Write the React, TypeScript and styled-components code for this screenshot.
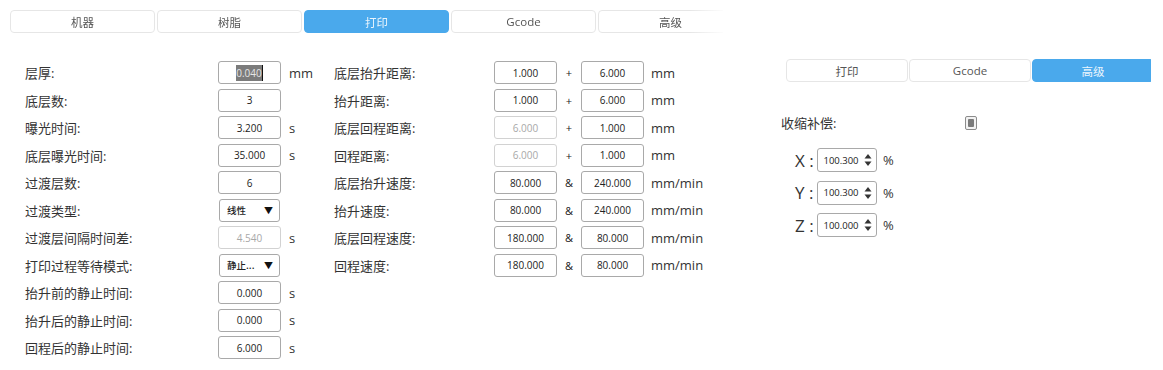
import React from "react";
import styled, { createGlobalStyle } from "styled-components";

const Global = createGlobalStyle`
  html, body { margin: 0; padding: 0; background: #ffffff; }
  body {
    font-family: "Open Sans", "Noto Sans CJK SC", sans-serif;
    color: #333333;
    width: 1163px;
    height: 370px;
    overflow: hidden;
  }
`;

const Root = styled.div`
  display: flex;
  align-items: flex-start;
  width: 1163px;
  height: 370px;
`;

const LeftPanel = styled.div`
  width: 713px;
  padding: 10px 0 0 10px;
  flex-shrink: 0;
`;

const TabBar = styled.div<{ $w: number; $gap: number }>`
  display: flex;
  gap: ${(p) => p.$gap}px;
  width: ${(p) => p.$w}px;
  overflow: hidden;
`;

const FadeBar = styled(TabBar)`
  -webkit-mask-image: linear-gradient(to right, #000 0, #000 680px, rgba(0,0,0,0.1) 713px);
  mask-image: linear-gradient(to right, #000 0, #000 680px, rgba(0,0,0,0.1) 713px);
`;

const Tab = styled.div<{ $active?: boolean; $w: number }>`
  flex-shrink: 0;
  width: ${(p) => p.$w}px;
  height: 23px;
  box-sizing: border-box;
  border: 1px solid ${(p) => (p.$active ? "#4aa9ec" : "#e6e6e6")};
  border-radius: 4px;
  background: ${(p) => (p.$active ? "#4aa9ec" : "#ffffff")};
  color: ${(p) => (p.$active ? "#eaf5fd" : "#555555")};
  font-size: 11.5px;
  display: flex;
  align-items: center;
  justify-content: center;
`;

const Form = styled.div`
  display: flex;
  margin-top: 28px;
  padding-left: 15px;
`;

const LeftGrid = styled.div`
  width: 309px;
  display: grid;
  grid-template-columns: 193px 63px auto;
  grid-auto-rows: 23px;
  row-gap: 4.5px;
  align-items: center;
`;

const MidGrid = styled.div`
  display: grid;
  grid-template-columns: 160px 63px 24px 63px auto;
  grid-auto-rows: 23px;
  row-gap: 4.5px;
  align-items: center;
`;

const Label = styled.div`
  font-size: 13px;
  color: #333;
  white-space: nowrap;
`;

const Unit = styled.div<{ $pad: number }>`
  font-size: 13px;
  color: #333;
  padding-left: ${(p) => p.$pad}px;
  white-space: nowrap;
`;

const Joiner = styled.div`
  font-size: 11px;
  color: #222;
  text-align: center;
`;

const Box = styled.div<{ $disabled?: boolean }>`
  height: 23px;
  box-sizing: border-box;
  border: 1px solid ${(p) => (p.$disabled ? "#d2d2d2" : "#a9a9a9")};
  border-radius: 3px;
  background: #fff;
  display: flex;
  align-items: center;
  justify-content: center;
  font-size: 10px;
  color: ${(p) => (p.$disabled ? "#a8a8a8" : "#222")};
`;

const Selected = styled.span`
  background: #7b7b7b;
  color: #e6e6e6;
  padding: 1px 0;
  border-right: 1px solid #111;
`;

const SelectBox = styled(Box)`
  width: 61px;
  margin-left: 1px;
  justify-content: space-between;
  padding: 0 6px 0 7px;
  font-family: "Noto Sans CJK SC", sans-serif;
  font-size: 9.5px;
  font-weight: 500;
`;

const Caret = styled.span`
  font-size: 9px;
  color: #111;
`;

const RightPanel = styled.div`
  margin-left: 58px;
  padding-top: 59px;
  width: 380px;
  flex-shrink: 0;
`;

const TabsWrap = styled.div`
  margin-left: 5px;
`;

const CheckRow = styled.div`
  display: grid;
  grid-template-columns: 184px 12px;
  align-items: center;
  margin-top: 31px;
  height: 16px;
`;

const Check = styled.div`
  width: 12px;
  height: 14px;
  box-sizing: border-box;
  border: 1px solid #8c8c8c;
  border-radius: 2px;
  background: #f2f2f2;
  padding: 2px;
  display: flex;
`;

const CheckFill = styled.div`
  flex: 1;
  background: #7a7a7a;
  border-radius: 1px;
`;

const AxisList = styled.div`
  display: grid;
  grid-template-columns: 22px 60px auto;
  grid-auto-rows: 24px;
  row-gap: 8.5px;
  align-items: center;
  margin-top: 19px;
  padding-left: 14px;
`;

const Axis = styled.div`
  font-size: 17px;
  color: #333;
  font-family: "Open Sans", sans-serif;
  white-space: nowrap;
`;

const Spin = styled.div`
  height: 24px;
  box-sizing: border-box;
  border: 1px solid #a9a9a9;
  border-radius: 3px;
  display: flex;
  align-items: center;
  padding: 0 4px 0 0;
`;

const SpinValue = styled.div`
  flex: 1;
  text-align: center;
  font-size: 9.5px;
  color: #222;
`;

const Percent = styled.div`
  font-size: 13px;
  color: #333;
  padding-left: 6px;
`;

type Row = {
  label: string;
  value?: string;
  unit?: string;
  disabled?: boolean;
  selected?: boolean;
  select?: string;
};

const leftRows: Row[] = [
  { label: "层厚:", value: "0.040", unit: "mm", selected: true },
  { label: "底层数:", value: "3" },
  { label: "曝光时间:", value: "3.200", unit: "s" },
  { label: "底层曝光时间:", value: "35.000", unit: "s" },
  { label: "过渡层数:", value: "6" },
  { label: "过渡类型:", select: "线性" },
  { label: "过渡层间隔时间差:", value: "4.540", unit: "s", disabled: true },
  { label: "打印过程等待模式:", select: "静止..." },
  { label: "抬升前的静止时间:", value: "0.000", unit: "s" },
  { label: "抬升后的静止时间:", value: "0.000", unit: "s" },
  { label: "回程后的静止时间:", value: "6.000", unit: "s" },
];

type PairRow = {
  label: string;
  a: string;
  aDisabled?: boolean;
  join: string;
  b: string;
  unit: string;
};

const midRows: PairRow[] = [
  { label: "底层抬升距离:", a: "1.000", join: "+", b: "6.000", unit: "mm" },
  { label: "抬升距离:", a: "1.000", join: "+", b: "6.000", unit: "mm" },
  { label: "底层回程距离:", a: "6.000", aDisabled: true, join: "+", b: "1.000", unit: "mm" },
  { label: "回程距离:", a: "6.000", aDisabled: true, join: "+", b: "1.000", unit: "mm" },
  { label: "底层抬升速度:", a: "80.000", join: "&", b: "240.000", unit: "mm/min" },
  { label: "抬升速度:", a: "80.000", join: "&", b: "240.000", unit: "mm/min" },
  { label: "底层回程速度:", a: "180.000", join: "&", b: "80.000", unit: "mm/min" },
  { label: "回程速度:", a: "180.000", join: "&", b: "80.000", unit: "mm/min" },
];

const axes = [
  { axis: "X", value: "100.300" },
  { axis: "Y", value: "100.300" },
  { axis: "Z", value: "100.000" },
];

const SpinArrows = () => (
  <svg width="8" height="14" viewBox="0 0 8 14">
    <path d="M4 1 L7.5 5.5 L0.5 5.5 Z" fill="#333" />
    <path d="M0.5 8.5 L7.5 8.5 L4 13 Z" fill="#333" />
  </svg>
);

export default function App() {
  const mainTabs = ["机器", "树脂", "打印", "Gcode", "高级"];
  const sideTabs = ["打印", "Gcode", "高级"];
  return (
    <>
      <Global />
      <Root>
        <LeftPanel>
          <FadeBar $w={713} $gap={2}>
            {mainTabs.map((t) => (
              <Tab key={t} $w={145} $active={t === "打印"}>
                {t}
              </Tab>
            ))}
          </FadeBar>
          <Form>
            <LeftGrid>
              {leftRows.map((r) => (
                <React.Fragment key={r.label}>
                  <Label>{r.label}</Label>
                  {r.select ? (
                    <SelectBox>
                      <span>{r.select}</span>
                      <Caret>▼</Caret>
                    </SelectBox>
                  ) : (
                    <Box $disabled={r.disabled}>
                      {r.selected ? <Selected>{r.value}</Selected> : r.value}
                    </Box>
                  )}
                  <Unit $pad={8}>{r.unit ?? ""}</Unit>
                </React.Fragment>
              ))}
            </LeftGrid>
            <MidGrid>
              {midRows.map((r) => (
                <React.Fragment key={r.label}>
                  <Label>{r.label}</Label>
                  <Box $disabled={r.aDisabled}>{r.a}</Box>
                  <Joiner>{r.join}</Joiner>
                  <Box>{r.b}</Box>
                  <Unit $pad={7}>{r.unit}</Unit>
                </React.Fragment>
              ))}
            </MidGrid>
          </Form>
        </LeftPanel>
        <RightPanel>
          <TabsWrap>
            <TabBar $w={365} $gap={1}>
              {sideTabs.map((t) => (
                <Tab key={t} $w={122} $active={t === "高级"}>
                  {t}
                </Tab>
              ))}
            </TabBar>
          </TabsWrap>
          <CheckRow>
            <Label>收缩补偿:</Label>
            <Check>
              <CheckFill />
            </Check>
          </CheckRow>
          <AxisList>
            {axes.map((a) => (
              <React.Fragment key={a.axis}>
                <Axis>{a.axis} :</Axis>
                <Spin>
                  <SpinValue>{a.value}</SpinValue>
                  <SpinArrows />
                </Spin>
                <Percent>%</Percent>
              </React.Fragment>
            ))}
          </AxisList>
        </RightPanel>
      </Root>
    </>
  );
}
